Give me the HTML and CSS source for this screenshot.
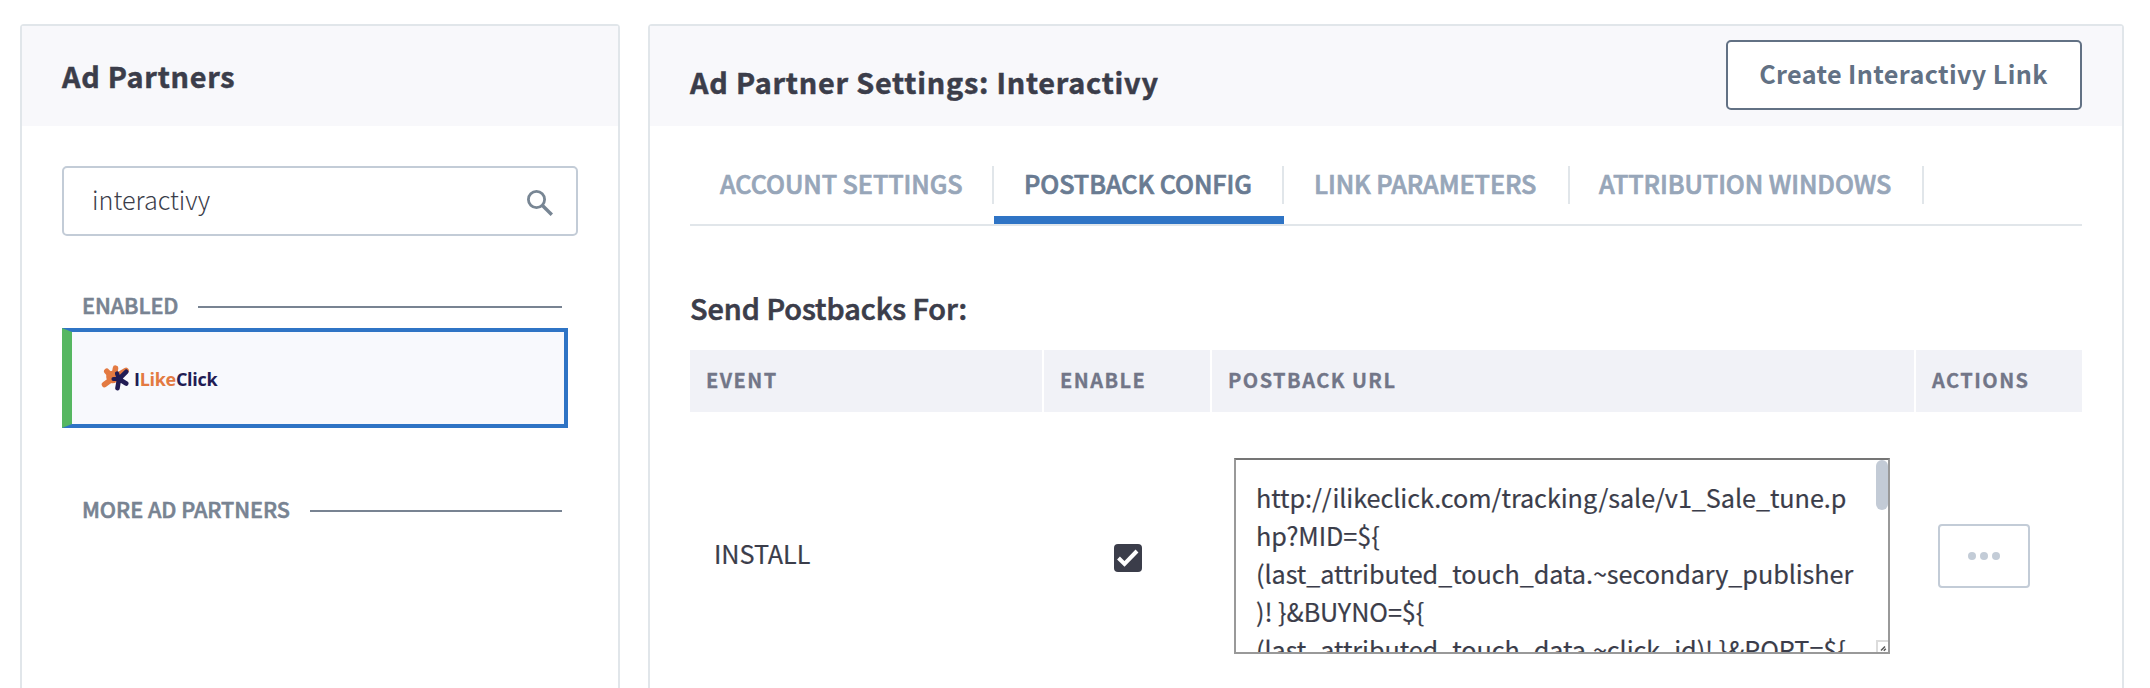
FILE: index.html
```html
<!DOCTYPE html>
<html lang="en">
<head>
<meta charset="utf-8">
<title>Ad Partner Settings</title>
<link rel="stylesheet" href="styles.css">
</head>
<body>
<main class="page">
  <aside class="panel partners">
    <header class="panel-header"><h1 class="title partners-title"><span>Ad Partners</span></h1></header>
    <div class="partners-body">
      <div class="search">
        <span class="search-text">interactivy</span>
        <svg class="search-icon" viewBox="0 0 26 26"><circle cx="9.5" cy="9.5" r="8.100" fill="none" stroke="#788694" stroke-width="2.800"/><path d="M15.200 15.200l9.600 9.600" stroke="#788694" stroke-width="3.400"/></svg>
      </div>
      <div class="group-label"><span class="enabled-label">ENABLED</span><i class="rule"></i></div>
      <div class="partner-card">
        <svg class="logo-mark" viewBox="0 0 28 26">
          <g fill="#e37a42" stroke="#e37a42" stroke-linecap="round" stroke-width="5.600"><path d="M14.500 3.200L13 12M5.800 6.300L12 13M3.500 19.500L11 14M25 5.500L14 12"/><circle cx="11.500" cy="12" r="3.500"/></g>
          <g fill="#211c54" stroke="#211c54" stroke-linecap="round"><path stroke-width="4.600" d="M25.200 6.800L18 14M25.200 18.500L18 14M16.500 23.200L18 14"/><path stroke-width="4.200" d="M16 8.500L18 14M12.500 14L18 14"/><circle cx="18.500" cy="13.500" r="2.500"/></g>
        </svg>
        <span class="logo-text">I<b>Like</b>Click</span>
      </div>
      <div class="group-label more"><span class="more-label">MORE AD PARTNERS</span><i class="rule"></i></div>
    </div>
  </aside>
  <section class="panel settings">
    <header class="panel-header settings-header">
      <h1 class="title settings-title"><span>Ad Partner Settings: Interactivy</span></h1>
      <button class="create" type="button">Create Interactivy Link</button>
    </header>
    <div class="settings-body">
      <nav class="tabs">
        <a class="tab t1"><span>ACCOUNT SETTINGS</span></a>
        <a class="tab t2 active"><span>POSTBACK CONFIG</span></a>
        <a class="tab t3"><span>LINK PARAMETERS</span></a>
        <a class="tab t4"><span>ATTRIBUTION WINDOWS</span></a>
      </nav>
      <h2 class="subtitle">Send Postbacks For:</h2>
      <div class="grid head">
        <div>EVENT</div><div>ENABLE</div><div>POSTBACK URL</div><div>ACTIONS</div>
      </div>
      <div class="grid row">
        <div class="event">INSTALL</div>
        <div class="enable"><svg class="check" viewBox="0 0 28 28"><rect width="28" height="28" rx="4" fill="#3b3d4a"/><path d="M4.500 14l6 6L23 7" fill="none" stroke="#fff" stroke-width="4"/></svg></div>
        <div class="url">
          <div class="url-box">
            <div class="url-text">http://ilikeclick.com/tracking/sale/v1_Sale_tune.p<br>hp?MID=${<br>(last_attributed_touch_data.~secondary_publisher<br>)! }&amp;BUYNO=${<br>(last_attributed_touch_data.~click_id)! }&amp;PORT=${</div>
            <div class="track"><i class="thumb"></i><svg class="resizer" viewBox="0 0 12 12"><path d="M1 12V1h11" fill="none" stroke="#dcdcdc" stroke-width="2"/><path d="M5 10.500l4-4M7.800 10.800l2-2" stroke="#555" stroke-width="1.500"/></svg></div>
          </div>
        </div>
        <div class="actions"><button class="more-btn" type="button" aria-label="More"><i></i><i></i><i></i></button></div>
      </div>
    </div>
  </section>
</main>
</body>
</html>
```
FILE: styles.css
```css
* { box-sizing: border-box; }
body { margin: 0; background: #fff; color: #3b3d4a; font-family: "Noto Sans CJK SC", "Noto Sans", sans-serif; }
button { font-family: inherit; margin: 0; padding: 0; background: #fff; }
span { white-space: nowrap; }
.page { display: flex; gap: 28px; height: 688px; padding: 24px 26px 0 20px; overflow: hidden; }
.panel { height: 700px; border: 2px solid #e1e6ea; border-radius: 4px; background: #fff; }
.partners { width: 600px; flex: none; }
.settings { width: 1476px; flex: none; }
.panel-header { height: 100px; background: #f8f8fb; padding: 0 40px; }
.title { margin: 0; font-size: 28.8px; line-height: 40px; font-weight: 700; white-space: nowrap; -webkit-text-stroke: .5px currentColor; }
.partners-title { padding-top: 30px; letter-spacing: .75px; }
.settings-title { padding-top: 36px; letter-spacing: .78px; }
.settings-header { display: flex; justify-content: space-between; align-items: flex-start; }
.create { width: 356px; height: 70px; margin-top: 14px; padding: 0 1px 5px 0; border: 2px solid #627184; border-radius: 5px; color: #627184; font-size: 25.2px; font-weight: 700; letter-spacing: .37px; white-space: nowrap; }
.partners-body { padding: 40px 40px 0; }
.search { display: flex; justify-content: space-between; align-items: center; height: 70px; padding: 0 23px 0 28px; border: 2px solid #c3ccd7; border-radius: 5px; }
.search-text { font-size: 25.2px; font-weight: 300; padding-bottom: 4px; }
.search-icon { width: 26px; height: 26px; margin-top: 4px; }
.group-label { display: flex; align-items: center; gap: 20px; height: 32px; margin: 55px 16px 5px 20px; color: #788392; font-size: 21.6px; font-weight: 500; line-height: 32px; -webkit-text-stroke: .6px currentColor; }
.group-label span { height: 37px; letter-spacing: -.05px; }
.group-label.more { margin-top: 67px; }
.rule { flex: 1; height: 2px; background: #788392; }
.partner-card { display: flex; align-items: center; width: 506px; height: 100px; padding-left: 29px; border: 4px solid #2f74c5; border-left: 10px solid #56b761; background: #f8f9fd; }
.logo-mark { width: 28px; height: 26px; }
.logo-text { margin: 2px 0 0 5px; color: #211c54; font: 700 18px/26px "Open Sans", sans-serif; letter-spacing: -.3px; }
.logo-text b { color: #e37a42; font-weight: 700; }
.settings-body { padding: 40px 40px 0; }
.tabs { display: flex; height: 60px; border-bottom: 2px solid #e1e6ea; }
.tab { height: 58px; color: #97a6b9; font-size: 25.2px; line-height: 34px; font-weight: 500; letter-spacing: -.07px; -webkit-text-stroke: .7px currentColor; }
.tab span { display: block; height: 38px; padding-left: 30px; border-right: 2px solid #e1e6ea; }
.tab.active { color: #697b92; border-bottom: 8px solid #2f74c5; }
.t1 { width: 304px; } .t2 { width: 290px; } .t3 { width: 286px; } .t4 { width: 354px; }
.t4 span { padding-left: 29px; }
.subtitle { margin: 62px 0 22px; font-size: 28.8px; line-height: 40px; font-weight: 500; -webkit-text-stroke: .7px currentColor; }
.grid { display: grid; grid-template-columns: 352px 166px 702px 166px; column-gap: 2px; }
.head > div { height: 62px; padding-left: 16px; background: #f1f2f7; color: #727688; font-size: 20px; font-weight: 700; line-height: 60px; letter-spacing: 1.45px; -webkit-text-stroke: .3px currentColor; }
.row { height: 288px; align-items: center; }
.event { padding: 0 0 6px 24px; font-size: 25.2px; letter-spacing: -.05px; -webkit-text-stroke: .2px currentColor; }
.enable { padding: 4px 0 0 70px; }
.check { display: block; width: 28px; height: 28px; }
.url { padding-left: 22px; }
.url-box { display: flex; justify-content: space-between; width: 656px; height: 196px; overflow: hidden; border: 2px solid #999; border-top-color: #757575; }
.url-text { padding: 18px 0 0 20px; font-size: 25.2px; line-height: 38px; letter-spacing: -.06px; white-space: nowrap; -webkit-text-stroke: .2px currentColor; }
.track { display: flex; flex-direction: column; justify-content: space-between; width: 12px; height: 192px; flex: none; }
.thumb { height: 50px; border-radius: 6px; background: #c3cbd6; }
.resizer { width: 12px; height: 12px; }
.actions { padding-left: 22px; }
.more-btn { display: flex; align-items: center; justify-content: center; gap: 4px; width: 92px; height: 64px; border: 2px solid #c3ccd7; border-radius: 4px; }
.more-btn i { width: 8px; height: 8px; border-radius: 50%; background: #c3ccd7; }
```
